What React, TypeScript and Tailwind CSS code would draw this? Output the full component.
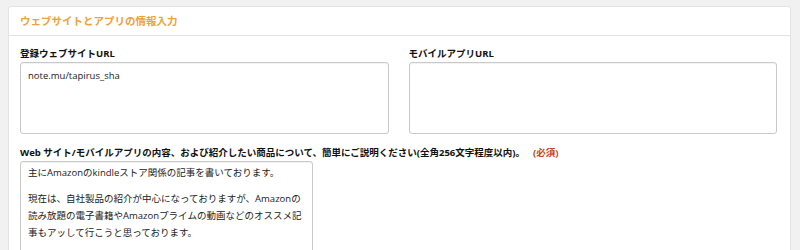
import React from 'react';

const FieldLabel: React.FC<{ children: React.ReactNode }> = ({ children }) => (
    <div className="text-[9.5px] font-bold leading-[14px] text-[#111] mb-[1px]">{children}</div>
);

const Box: React.FC<{ className?: string; children?: React.ReactNode }> = ({ className = '', children }) => (
    <div
        className={`border border-[#c9c9c9] rounded-[3px] bg-white shadow-[inset_0_1px_1px_rgba(0,0,0,0.06)] px-[7px] text-[9.5px] leading-[17px] text-[#222] ${className}`}
    >
        {children}
    </div>
);

const App: React.FC = () => {
    return (
        <div
            className="w-[800px] h-[250px] overflow-hidden bg-[#f1f1f1] pt-[6px] pl-[8px] pr-[9px]"
            style={{ fontFamily: '"Open Sans", "Noto Sans CJK JP", sans-serif' }}
        >
            <div className="bg-white border border-[#e3e3e3] rounded-t-[3px] h-[260px]">
                <div className="h-[29px] border-b border-[#e2e2e2] flex items-center px-[11px]">
                    <h2 className="text-[10.5px] font-bold text-[#f0a13a] translate-y-[1px]">ウェブサイトとアプリの情報入力</h2>
                </div>

                <div className="pl-[11px] pr-[13px] pt-[11px]">
                    <div className="grid grid-cols-2 gap-x-[20px]">
                        <div>
                            <FieldLabel>登録ウェブサイトURL</FieldLabel>
                            <Box className="h-[72px] pt-[4px]">note.mu/tapirus_sha</Box>
                        </div>
                        <div>
                            <FieldLabel>モバイルアプリURL</FieldLabel>
                            <Box className="h-[72px]" />
                        </div>
                    </div>

                    <div className="mt-[12px]">
                        <FieldLabel>
                            Web サイト/モバイルアプリの内容、および紹介したい商品について、簡単にご説明ください(全角256文字程度以内)。
                            <span className="ml-[8px] text-[#c8461f]">(必須)</span>
                        </FieldLabel>
                        <Box className="w-[293px] h-[100px] pt-[2px]">
                            <p>主にAmazonのkindleストア関係の記事を書いております。</p>
                            <p className="mt-[9px] whitespace-nowrap">
                                現在は、自社製品の紹介が中心になっておりますが、Amazonの
                                <br />
                                読み放題の電子書籍やAmazonプライムの動画などのオススメ記
                                <br />
                                事もアッして行こうと思っております。
                            </p>
                        </Box>
                    </div>
                </div>
            </div>
        </div>
    );
};

export default App;
